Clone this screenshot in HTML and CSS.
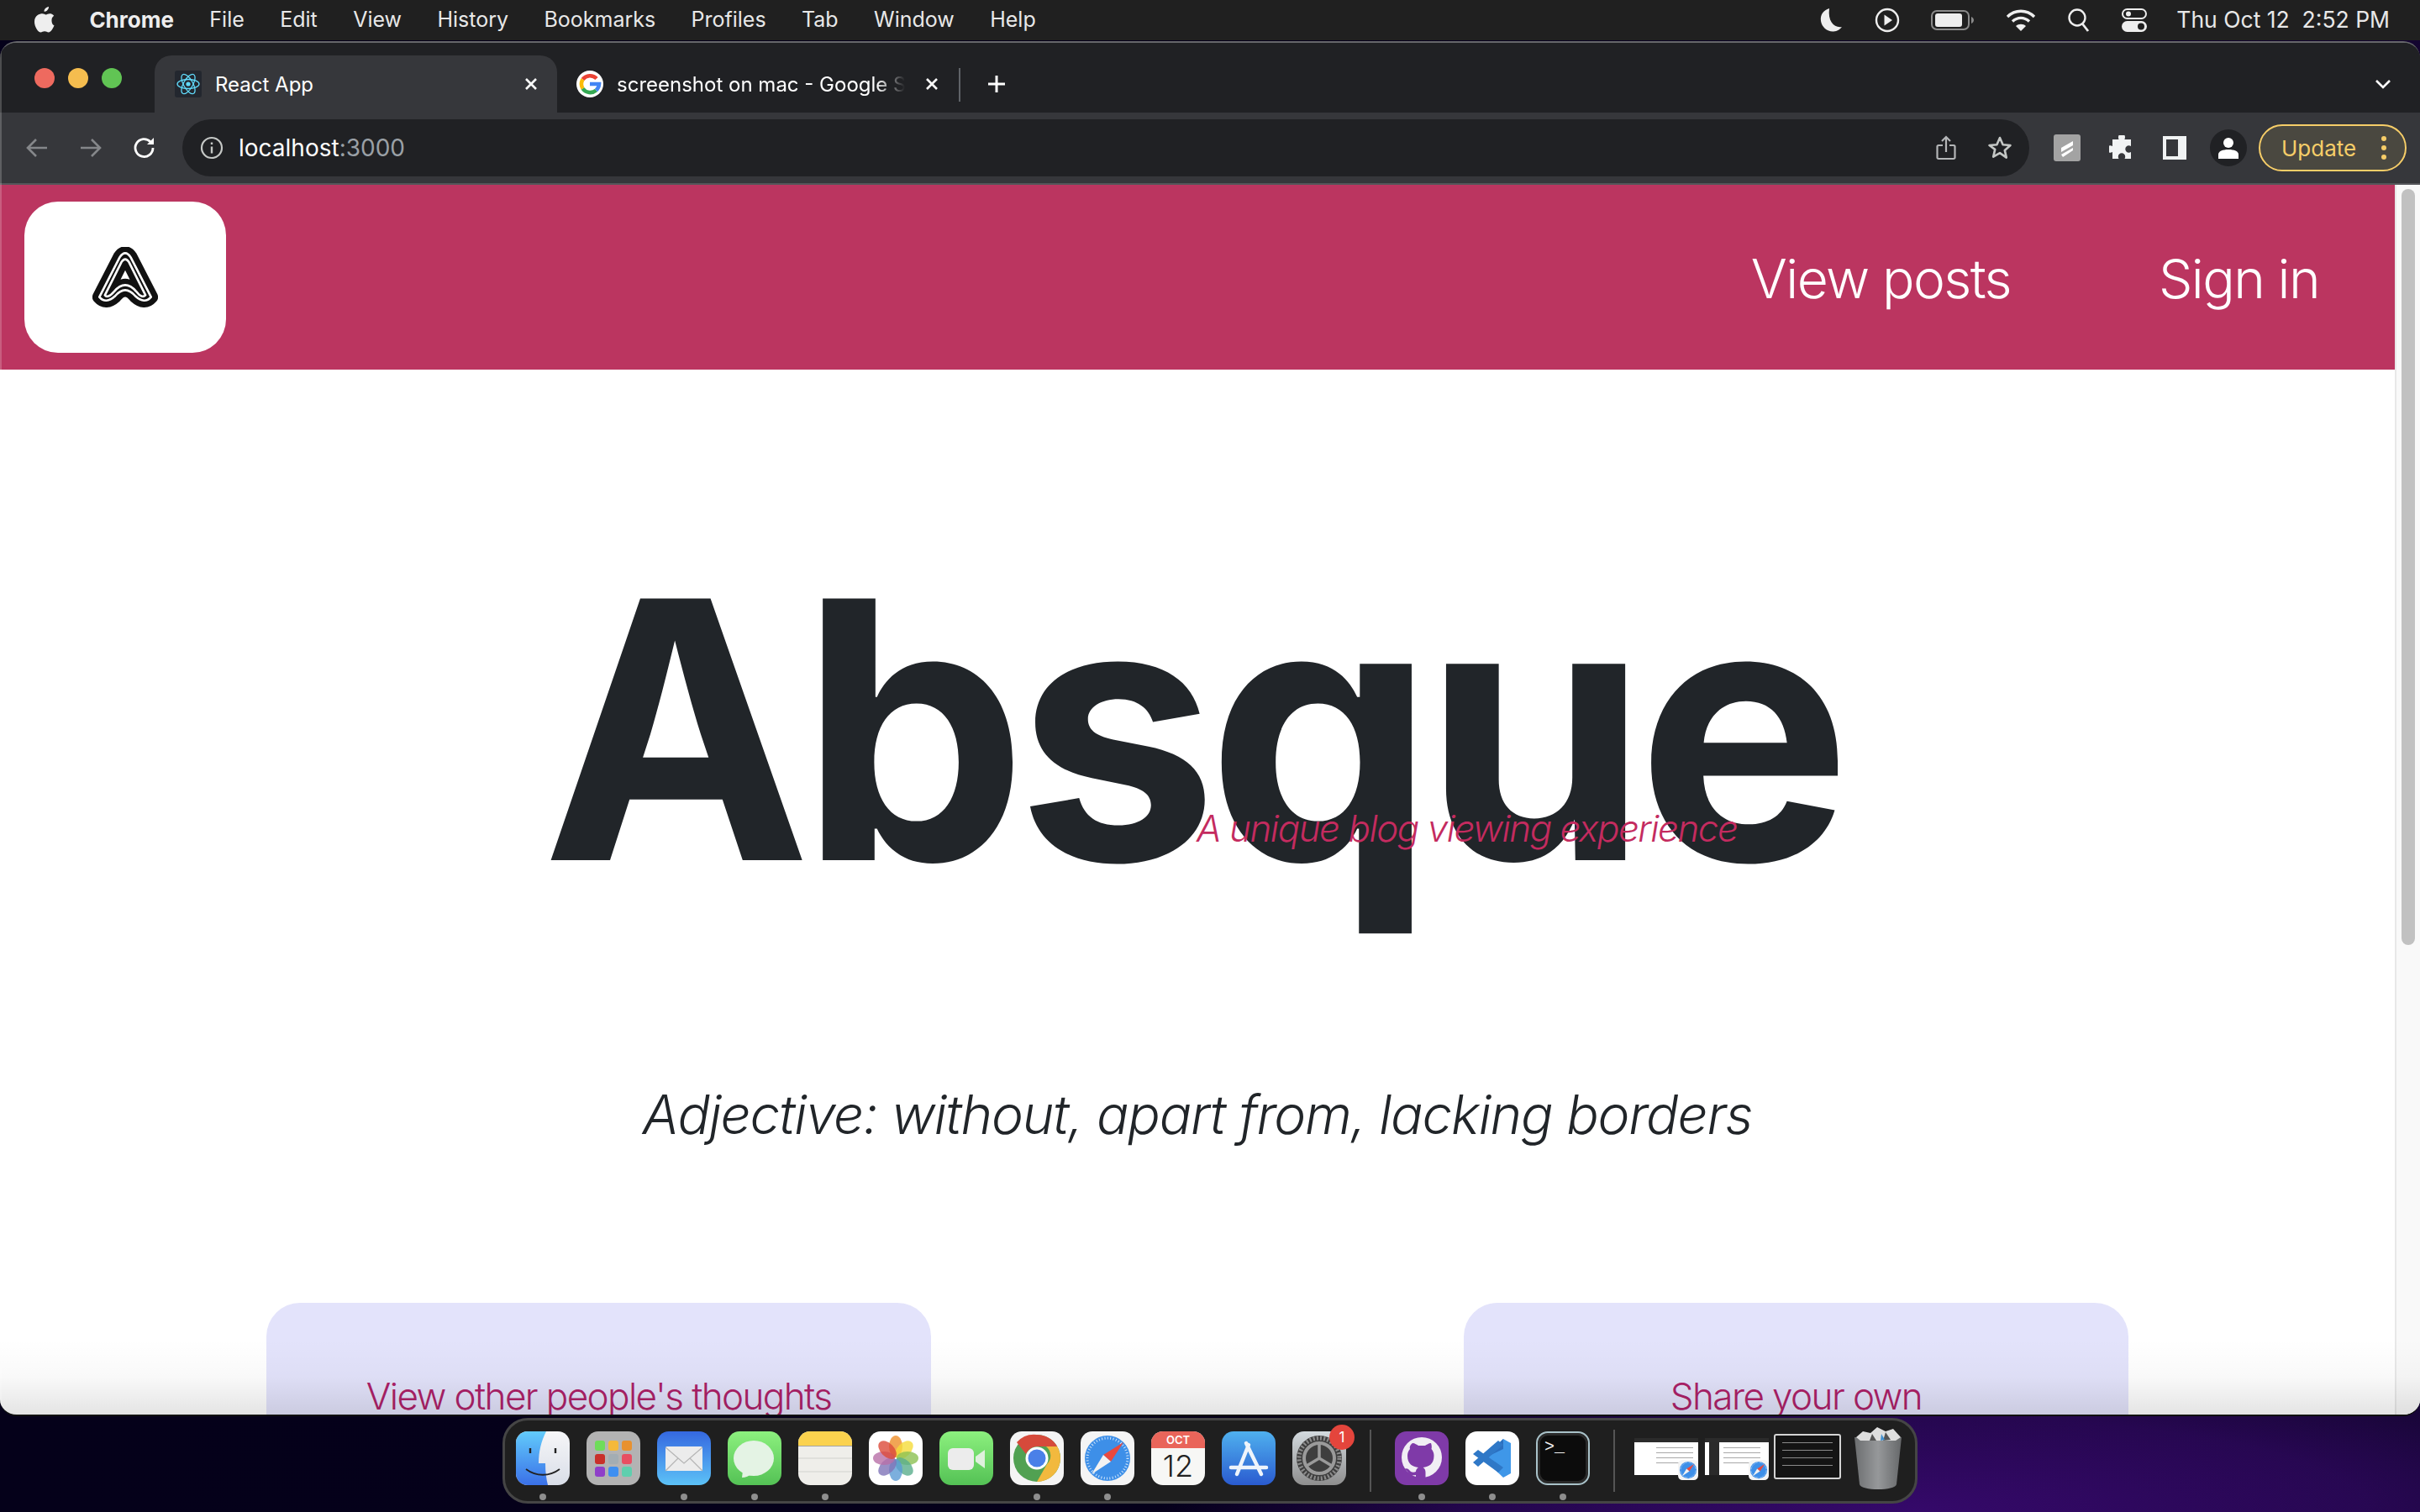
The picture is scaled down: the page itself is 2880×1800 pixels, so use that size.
FILE: index.html
```html
<!DOCTYPE html>
<html lang="en">
<head>
    <meta charset="UTF-8">
    <title>Absque</title>
    <link rel="stylesheet" href="styles.css">
</head>
<body>

<svg class="defs" width="0" height="0">
    <symbol id="safari" viewBox="0 0 64 64">
        <rect width="64" height="64" rx="14" fill="#f4f4f4"/>
        <circle cx="32" cy="32" r="27" fill="#3d8fe8"/>
        <circle cx="32" cy="32" r="24" fill="none" stroke="#cfe4fa" stroke-width="3" stroke-dasharray="1 2.4"/>
        <path d="M51 13 L27 28 L36 36 Z" fill="#e8493f"/>
        <path d="M13 51 L27 28 L36 36 Z" fill="#f2f2f2"/>
    </symbol>
</svg>

<!-- mac menu bar -->
<div class="menubar">
    <div class="menu-left">
        <svg class="apple" width="26" height="32" viewBox="0 0 26 32"><path fill="#eee" d="M18 1c.2 2.600-2.300 6-5.400 5.800C12.300 4 15 1.300 18 1zM21.500 16.500c0-3 2.400-4.500 2.700-4.800-1.500-2.200-3.800-2.500-4.600-2.500-2-.2-3.900 1.200-4.900 1.200s-2.600-1.200-4.200-1.200C7 9.300 1 11 1 19c0 6 4.400 12.500 7.500 12.500 1.500 0 2.500-1.200 4.600-1.200s2.900 1.200 4.600 1.200c3.200 0 6-5.900 6.800-8.200-3-1.300-3-5-3-6.800z"/></svg>
        <span class="menu-app">Chrome</span>
        <span>File</span>
        <span>Edit</span>
        <span>View</span>
        <span>History</span>
        <span>Bookmarks</span>
        <span>Profiles</span>
        <span>Tab</span>
        <span>Window</span>
        <span>Help</span>
    </div>
    <div class="menu-right">
        <svg width="28" height="30" viewBox="0 0 28 30"><path fill="#eee" d="M11 1C4 3 0 8.500 1 16c1 7.500 8 13 15 12.500 4.500-.3 8-2.500 10-5.500-9 1.500-17-6-15-22z"/></svg>
        <svg width="30" height="30" viewBox="0 0 30 30"><circle cx="15" cy="15" r="13" fill="none" stroke="#eee" stroke-width="2.400"/><path fill="#eee" d="M11.500 8.500 L21 15 L11.500 21.500z"/></svg>
        <svg width="52" height="24" viewBox="0 0 52 24"><rect x="1" y="1" width="44" height="22" rx="6" fill="none" stroke="#8a8a8a" stroke-width="2"/><rect x="5" y="4" width="32" height="16" rx="3" fill="#eee"/><path fill="#8a8a8a" d="M48 8c2 1 3 2.500 3 4s-1 3-3 4z"/></svg>
        <svg width="36" height="28" viewBox="0 0 36 28"><g fill="none" stroke="#eee" stroke-width="3.400"><path d="M2 10C11 1 25 1 34 10"/><path d="M8 15.500C14 10 22 10 28 15.500"/></g><path fill="#eee" d="M18 27l-6-6c3-3 9-3 12 0z"/></svg>
        <svg width="28" height="30" viewBox="0 0 28 30"><circle cx="12" cy="12" r="9.500" fill="none" stroke="#eee" stroke-width="2.400"/><path d="M18 19l7 9" stroke="#eee" stroke-width="2.800"/></svg>
        <svg width="30" height="28" viewBox="0 0 30 28"><rect x="1" y="1" width="28" height="11" rx="5.500" fill="none" stroke="#eee" stroke-width="2"/><circle cx="8" cy="6.500" r="3" fill="#eee"/><rect y="15" width="30" height="13" rx="6.500" fill="#eee"/><circle cx="23" cy="21.500" r="4" fill="#202020"/></svg>
        <span class="clock">Thu Oct 12&nbsp; 2:52 PM</span>
    </div>
</div>

<div class="desktop">
    <div class="window">

        <!-- tab strip -->
        <div class="tabstrip">
            <div class="lights">
                <i class="light red"></i>
                <i class="light yellow"></i>
                <i class="light green"></i>
            </div>
            <div class="tab tab-active">
                <svg class="favicon" width="32" height="32" viewBox="0 0 32 32">
                    <rect width="32" height="32" rx="3" fill="#23272f"/>
                    <g fill="none" stroke="#61dafb" stroke-width="1.300">
                        <ellipse cx="16" cy="16" rx="13" ry="5.500"/>
                        <ellipse cx="16" cy="16" rx="13" ry="5.500" transform="rotate(60 16 16)"/>
                        <ellipse cx="16" cy="16" rx="13" ry="5.500" transform="rotate(120 16 16)"/>
                    </g>
                    <circle cx="16" cy="16" r="2.600" fill="#61dafb"/>
                </svg>
                <span class="tab-title">React App</span>
                <svg class="tab-close" width="16" height="16" viewBox="0 0 16 16"><path d="M2 2l12 12M14 2L2 14" stroke="#fff" stroke-width="2.600"/></svg>
            </div>
            <div class="tab tab-other">
                <svg class="favicon" width="32" height="32" viewBox="0 0 32 32">
                    <circle cx="16" cy="16" r="16" fill="#fff"/>
                    <g fill="none" stroke-width="4.600">
                        <path d="M24 9.500A11 11 0 0 0 7.500 10.500" stroke="#ea4335"/>
                        <path d="M7.500 10.500a11 11 0 0 0 0 11" stroke="#fbbc05"/>
                        <path d="M7.500 21.500A11 11 0 0 0 23.500 23.500" stroke="#34a853"/>
                        <path d="M23.500 23.500A11 11 0 0 0 27 16H16" stroke="#4285f4"/>
                    </g>
                </svg>
                <span class="tab-title tab-fade">screenshot on mac - Google Search</span>
                <svg class="tab-close" width="16" height="16" viewBox="0 0 16 16"><path d="M2 2l12 12M14 2L2 14" stroke="#fff" stroke-width="2.600"/></svg>
            </div>
            <i class="tab-sep"></i>
            <svg class="tab-plus" width="24" height="24" viewBox="0 0 24 24"><path d="M12 2v20M2 12h20" stroke="#fff" stroke-width="3"/></svg>
            <svg class="tab-search" width="22" height="14" viewBox="0 0 22 14"><path d="M3 3l8 8 8-8" fill="none" stroke="#fff" stroke-width="2.600"/></svg>
        </div>

        <!-- toolbar -->
        <div class="toolbar">
            <div class="nav-btns">
                <svg width="28" height="28" viewBox="0 0 28 28"><path d="M26 14H3M13 4L3 14l10 10" fill="none" stroke="#85878a" stroke-width="2.600"/></svg>
                <svg width="28" height="28" viewBox="0 0 28 28"><path d="M2 14h23M15 4l10 10-10 10" fill="none" stroke="#85878a" stroke-width="2.600"/></svg>
                <svg width="28" height="28" viewBox="0 0 28 28"><path d="M24 14a10.500 10.500 0 1 1-3-7.300" fill="none" stroke="#fff" stroke-width="2.800"/><path d="M25 2v8h-8z" fill="#fff"/></svg>
            </div>
            <div class="urlbar">
                <svg width="28" height="28" viewBox="0 0 28 28"><circle cx="14" cy="14" r="12" fill="none" stroke="#c4c7c5" stroke-width="2.200"/><path d="M14 12.500v8M14 7.500v2.600" stroke="#c4c7c5" stroke-width="2.400"/></svg>
                <span class="url">localhost<span class="url-port">:3000</span></span>
                <svg class="url-share" width="24" height="30" viewBox="0 0 24 30"><path d="M8 12H3a1.500 1.500 0 0 0-1.500 1.500v13A1.500 1.500 0 0 0 3 28h18a1.500 1.500 0 0 0 1.500-1.500v-13A1.500 1.500 0 0 0 21 12h-5M12 20V2M7 7l5-5 5 5" fill="none" stroke="#b4b6b8" stroke-width="2.200"/></svg>
                <svg class="url-star" width="30" height="30" viewBox="0 0 30 30"><path d="M15 3l3.600 8.200 8.900.8-6.700 5.900 2 8.700L15 21.100l-7.800 4.500 2-8.700L2.500 12l8.900-.8z" fill="none" stroke="#c4c7c5" stroke-width="2.600" stroke-linejoin="round"/></svg>
            </div>
            <div class="toolbar-right">
                <svg width="32" height="32" viewBox="0 0 32 32"><rect width="32" height="32" rx="3" fill="#a3a3a3"/><path d="M9 16l14-8v5L9 21zM9 24l14-8v3L11 27z" fill="#fff"/></svg>
                <svg width="30" height="30" viewBox="0 0 30 30"><path fill="#f1f3f4" d="M11 2.500a4 4 0 0 1 8 0c0 1-.3 1.500-.6 2.500H26v8c-1-.5-1.500-.7-2.500-.7a4.200 4.200 0 0 0 0 8.400c1 0 1.500-.2 2.500-.7v8h-7.500c.5-1 .7-1.500.7-2.500a4.200 4.200 0 0 0-8.400 0c0 1 .2 1.500.7 2.500H4v-8c-1 .5-2 .7-2.500.7a4.200 4.200 0 0 1 0-8.400c.5 0 1.500.2 2.500.7V5h7.500c-.3-1-.5-1.500-.5-2.500z"/></svg>
                <svg width="28" height="28" viewBox="0 0 28 28"><path fill-rule="evenodd" fill="#f1f3f4" d="M0 0h28v28H0zM4 4v20h14V4z"/></svg>
                <span class="avatar">
                    <svg width="26" height="26" viewBox="0 0 26 26"><circle cx="13" cy="7" r="6" fill="#fff"/><path d="M1 26v-5c0-4 5-6 12-6s12 2 12 6v5z" fill="#fff"/></svg>
                </span>
                <span class="update">
                    <span>Update</span>
                    <span class="update-dots"><i></i><i></i><i></i></span>
                </span>
            </div>
        </div>

        <!-- page -->
        <div class="viewport">
            <div class="page">
                <header class="site-header">
                    <div class="logo-card">
                        <svg width="78" height="72" viewBox="3.500 6 71 65">
                            <path d="M11 60 L33 17 Q39 8 45 17 L67 60 Q60 68 50 59 Q39 46 28 59 Q18 68 11 60Z" fill="#111" stroke="#111" stroke-width="15" stroke-linejoin="round"/>
                            <path d="M11 60 L33 17 Q39 8 45 17 L67 60 Q60 68 50 59 Q39 46 28 59 Q18 68 11 60Z" fill="#111" stroke="#fff" stroke-width="2.400" stroke-linejoin="round"/>
                            <path d="M17 58 L35 22 Q39 16 43 22 L61 58 Q57 62 51 54 Q39 40 27 54 Q20 62 17 58Z" fill="#111" stroke="#fff" stroke-width="2.400" stroke-linejoin="round"/>
                            <path d="M39 31 L44 41 Q39 39 34 41Z" fill="#fff"/>
                        </svg>
                    </div>
                    <nav class="site-nav">
                        <a>View posts</a>
                        <a>Sign in</a>
                    </nav>
                </header>
                <section class="hero">
                    <h1>Absque</h1>
                    <p class="hero-sub">A unique blog viewing experience</p>
                    <p class="hero-def">Adjective: without, apart from, lacking borders</p>
                </section>
                <section class="cards">
                    <div class="card">View other people's thoughts</div>
                    <div class="card">Share your own</div>
                </section>
            </div>
            <div class="scrollbar"><i class="scroll-thumb"></i></div>
            <div class="dock-shade"></div>
        </div>
    </div>

    <!-- dock -->
    <div class="dock">
        <div class="dock-item on">
            <svg class="icon" viewBox="0 0 64 64"><defs><linearGradient id="finder-bg" x1="0" y1="0" x2="0" y2="1"><stop offset="0" stop-color="#62cbfb"/><stop offset="1" stop-color="#3a70e8"/></linearGradient><linearGradient id="finder-face" x1="0" y1="0" x2="0" y2="1"><stop offset="0" stop-color="#f6f6f8"/><stop offset="1" stop-color="#d9dee8"/></linearGradient></defs><rect width="64" height="64" rx="14" fill="url(#finder-face)"/><path d="M14 0h22c-6 12-9 24-9 38h8c0 10 1 18 3 26H14A14 14 0 0 1 0 50V14A14 14 0 0 1 14 0z" fill="url(#finder-bg)"/><path d="M17 20v6M47 20v6" stroke="#222" stroke-width="2.400"/><path d="M12 45c12 9 28 9 40 0" fill="none" stroke="#222" stroke-width="1.800"/></svg>
        </div>
        <div class="dock-item">
            <svg class="icon" viewBox="0 0 64 64"><rect width="64" height="64" rx="14" fill="#b3b3b3"/><g><rect x="10" y="11" width="12" height="12" rx="3" fill="#6fdc5a"/><rect x="26" y="11" width="12" height="12" rx="3" fill="#f4b93a"/><rect x="42" y="11" width="12" height="12" rx="3" fill="#e8912f"/><rect x="10" y="27" width="12" height="12" rx="3" fill="#c9302a"/><rect x="26" y="27" width="12" height="12" rx="3" fill="#a3adb3"/><rect x="42" y="27" width="12" height="12" rx="3" fill="#e84f62"/><rect x="10" y="42" width="12" height="12" rx="3" fill="#8f3fc9"/><rect x="26" y="42" width="12" height="12" rx="3" fill="#3f8ff0"/><rect x="42" y="42" width="12" height="12" rx="3" fill="#5fcfae"/></g></svg>
        </div>
        <div class="dock-item on">
            <svg class="icon" viewBox="0 0 64 64"><defs><linearGradient id="mail-bg" x1="0" y1="0" x2="0" y2="1"><stop offset="0" stop-color="#3568e0"/><stop offset="1" stop-color="#5cc2f7"/></linearGradient></defs><rect width="64" height="64" rx="14" fill="url(#mail-bg)"/><rect x="10" y="18" width="44" height="29" rx="2" fill="#ececec"/><path d="M10 19l22 19 22-19M10 47l15-15M54 47L39 32" fill="none" stroke="#b5b5b5" stroke-width="1.200"/></svg>
        </div>
        <div class="dock-item on">
            <svg class="icon" viewBox="0 0 64 64"><defs><linearGradient id="msg-bg" x1="0" y1="0" x2="0" y2="1"><stop offset="0" stop-color="#8cf07e"/><stop offset="1" stop-color="#54c255"/></linearGradient></defs><rect width="64" height="64" rx="14" fill="url(#msg-bg)"/><ellipse cx="31" cy="32" rx="24" ry="21" fill="#e4f3e4"/><path d="M18 47l-1 8c4 0 9-2 12-5z" fill="#e4f3e4"/></svg>
        </div>
        <div class="dock-item on">
            <svg class="icon" viewBox="0 0 64 64"><rect width="64" height="64" rx="14" fill="#efeeea"/><path d="M0 17V14A14 14 0 0 1 14 0h36a14 14 0 0 1 14 14v3z" fill="#fbd24e"/><path d="M0 17.500h64" stroke="#a5a5a0" stroke-width="1.200"/><path d="M0 32h64M0 48h64" stroke="#dcdcd8" stroke-width="1.400"/></svg>
        </div>
        <div class="dock-item">
            <svg class="icon" viewBox="0 0 64 64"><rect width="64" height="64" rx="14" fill="#fff"/><g fill-opacity=".8"><ellipse cx="32" cy="18" rx="8" ry="13" fill="#ee8f2a"/><ellipse cx="32" cy="18" rx="8" ry="13" fill="#f5dc3a" transform="rotate(45 32 32)"/><ellipse cx="32" cy="18" rx="8" ry="13" fill="#8cc152" transform="rotate(90 32 32)"/><ellipse cx="32" cy="18" rx="8" ry="13" fill="#5aae8c" transform="rotate(135 32 32)"/><ellipse cx="32" cy="18" rx="8" ry="13" fill="#5b9bd5" transform="rotate(180 32 32)"/><ellipse cx="32" cy="18" rx="8" ry="13" fill="#7f74b8" transform="rotate(225 32 32)"/><ellipse cx="32" cy="18" rx="8" ry="13" fill="#b86fa8" transform="rotate(270 32 32)"/><ellipse cx="32" cy="18" rx="8" ry="13" fill="#dc4a3a" transform="rotate(315 32 32)"/></g></svg>
        </div>
        <div class="dock-item">
            <svg class="icon" viewBox="0 0 64 64"><defs><linearGradient id="ft-bg" x1="0" y1="0" x2="0" y2="1"><stop offset="0" stop-color="#8cf07e"/><stop offset="1" stop-color="#54c255"/></linearGradient></defs><rect width="64" height="64" rx="14" fill="url(#ft-bg)"/><rect x="10" y="20" width="31" height="26" rx="6" fill="#ececec"/><path d="M43 30l11-8v22l-11-8z" fill="#dff0dd"/></svg>
        </div>
        <div class="dock-item on">
            <svg class="icon" viewBox="0 0 64 64"><rect width="64" height="64" rx="14" fill="#f4f4f4"/><circle cx="32" cy="32" r="28" fill="#51a152"/><path d="M32 4a28 28 0 0 1 24.200 14H32a14 14 0 0 0-13 9L8 13A28 28 0 0 1 32 4z" fill="#d64a3b"/><path d="M56.200 18A28 28 0 0 1 32 60l12-21a14 14 0 0 0-1-21z" fill="#f2b93e"/><circle cx="32" cy="32" r="13.500" fill="#fff"/><circle cx="32" cy="32" r="10.500" fill="#4a80e8"/></svg>
        </div>
        <div class="dock-item on">
            <svg class="icon"><use href="#safari"/></svg>
        </div>
        <div class="dock-item">
            <div class="calendar">
                <span class="cal-month">OCT</span>
                <span class="cal-day">12</span>
            </div>
        </div>
        <div class="dock-item">
            <svg class="icon" viewBox="0 0 64 64"><defs><linearGradient id="store-bg" x1="0" y1="0" x2="0" y2="1"><stop offset="0" stop-color="#4fb0ee"/><stop offset="1" stop-color="#2a5bd0"/></linearGradient></defs><rect width="64" height="64" rx="14" fill="url(#store-bg)"/><path d="M11 43h42M32 16L18 51M29 14l18 37" fill="none" stroke="#eef4fb" stroke-width="4.500" stroke-linecap="round"/></svg>
        </div>
        <div class="dock-item">
            <svg class="icon" viewBox="0 0 64 64"><defs><linearGradient id="set-bg" x1="0" y1="0" x2="0" y2="1"><stop offset="0" stop-color="#d3dade"/><stop offset="1" stop-color="#8e8e8e"/></linearGradient></defs><rect width="64" height="64" rx="14" fill="url(#set-bg)"/><circle cx="32" cy="32" r="27" fill="#3e3e3e"/><circle cx="32" cy="32" r="24" fill="none" stroke="#8c8c8c" stroke-width="5" stroke-dasharray="2 2.200"/><circle cx="32" cy="32" r="18" fill="none" stroke="#9a9a9a" stroke-width="4"/><path d="M32 32V15M32 32L17 41M32 32l15 9" stroke="#9a9a9a" stroke-width="3.500"/></svg>
            <span class="badge">1</span>
        </div>
        <i class="dock-sep"></i>
        <div class="dock-item on">
            <svg class="icon" viewBox="0 0 64 64"><rect width="64" height="64" rx="14" fill="#7f3aa8"/><circle cx="32" cy="31" r="24" fill="#f1eef4"/><path d="M21 14c3 0 5 2 7 3h8c2-1 4-3 7-3 1 3 1 5 .5 7 2 2 3 5 3 8 0 10-6 13-13 14 2 1 3 3 3 6v15H25V52c-5 1-8 0-10-4-1-2-3-3-4-3 4-2 6 1 8 3 2 1 4 1 6 0 0-2 1-4 3-5-7-1-13-4-13-14 0-3 1-6 3-8-.5-2-.5-4 3-7z" fill="#7f3aa8"/></svg>
        </div>
        <div class="dock-item on">
            <svg class="icon" viewBox="0 0 64 64"><rect width="64" height="64" rx="14" fill="#fff"/><path d="M45 9l9 5v36l-9 5-24-23z" fill="#3f97e8"/><path d="M45 9L22 32 45 21z" fill="#2b6fbf"/><path d="M15 22l-6 5 30 22 6-6zM9 37l6 5 30-26-6-5z" fill="#2f78c7"/></svg>
        </div>
        <div class="dock-item on">
            <div class="terminal">&gt;_</div>
        </div>
        <i class="dock-sep"></i>
        <div class="thumb">
            <div class="thumb-page"><i></i><i></i><i></i><i></i></div>
            <svg class="thumb-badge"><use href="#safari"/></svg>
        </div>
        <div class="thumb">
            <div class="thumb-page thumb-page-split"><i></i><i></i><i></i><i></i></div>
            <svg class="thumb-badge"><use href="#safari"/></svg>
        </div>
        <div class="thumb thumb-dark">
            <div class="thumb-page thumb-page-dark"><i></i><i></i><i></i><i></i></div>
        </div>
        <svg class="trash" viewBox="0 0 58 76">
            <defs>
                <linearGradient id="trash-can" x1="0" y1="0" x2="1" y2="0">
                    <stop offset="0" stop-color="#6c6e70"/>
                    <stop offset=".5" stop-color="#96989a"/>
                    <stop offset="1" stop-color="#66686a"/>
                </linearGradient>
            </defs>
            <path d="M1 14h56l-6 56c-1 4-11 6-22 6S8 74 7 70z" fill="url(#trash-can)"/>
            <path d="M3 14l8-7 9 2 8-7 10 5 9-3 9 10-6 4H8z" fill="#dedede"/>
            <path d="M22 10l5 8-8 0zM38 8l6 9-9 1z" fill="#555"/>
            <path d="M33 10l4 7-5 1z" fill="#3f8fd0"/>
        </svg>
    </div>
</div>

</body>
</html>
```

FILE: styles.css
```css
* {
    box-sizing: border-box;
}

html, body {
    margin: 0;
    height: 1800px;
    overflow: hidden;
}

body {
    width: 2880px;
    font-family: Inter, "Liberation Sans", sans-serif;
    background: #202020;
}

.defs {
    position: absolute;
}

/* menu bar */
.menubar {
    height: 48px;
    background: #202020;
    color: #e8e8e8;
    font-size: 25px;
    display: flex;
    align-items: center;
    justify-content: space-between;
    padding: 0 36px 0 40px;
}

.menu-left {
    display: flex;
    align-items: center;
    gap: 42.400px;
    padding-bottom: 2px;
}

.apple {
    margin-right: -2px;
}

.menu-app {
    font-weight: 700;
    font-size: 26px;
    color: #eee;
}

.menu-right {
    display: flex;
    align-items: center;
    gap: 37px;
}

.clock {
    font-size: 26.500px;
    margin-left: -2px;
    padding-bottom: 2px;
}

/* desktop */
.desktop {
    position: relative;
    height: 1752px;
    background:
        radial-gradient(ellipse 900px 190px at 2280px 1752px, #35096a 0%, rgba(53, 9, 106, 0.6) 60%, rgba(53, 9, 106, 0) 100%),
        linear-gradient(90deg, #05011a 0%, #05001a 55%, #0c0326 75%, #140530 100%);
}

.window {
    position: absolute;
    top: 1px;
    left: 0;
    width: 2880px;
    height: 1637px;
    display: flex;
    flex-direction: column;
    border-radius: 20px;
    overflow: hidden;
    background: #202124;
    border-top: 2px solid #66676a;
    border-bottom: 2px solid #111;
}

.window::after {
    content: "";
    position: absolute;
    left: 0;
    top: 0;
    bottom: 0;
    width: 2px;
    background: rgba(255, 255, 255, 0.2);
}

.tabstrip {
    height: 83px;
    flex: none;
    display: flex;
    align-items: flex-end;
    position: relative;
    background: #202124;
}

.lights {
    width: 184px;
    align-self: flex-start;
    padding: 30px 0 0 41px;
    display: flex;
    gap: 16px;
}

.light {
    width: 24px;
    height: 24px;
    border-radius: 50%;
}

.red { background: #ee6a5f; }
.yellow { background: #f5bd4f; }
.green { background: #61c454; }

.tab {
    height: 68px;
    display: flex;
    align-items: center;
    color: #fff;
    font-size: 24px;
}

.tab-active {
    width: 479px;
    background: #36373b;
    border-radius: 20px 20px 0 0;
    padding: 0 23px 0 24px;
}

.tab-other {
    width: 470px;
    padding: 0 16px 0 23px;
}

.tab-title {
    margin-left: 16px;
    flex: 1;
    white-space: nowrap;
    overflow: hidden;
}

.tab-fade {
    -webkit-mask-image: linear-gradient(90deg, #000 90%, transparent 100%);
    mask-image: linear-gradient(90deg, #000 90%, transparent 100%);
}

.tab-close {
    flex: none;
    margin-left: 24px;
}

.tab-sep {
    width: 2px;
    height: 40px;
    background: #5f6368;
    margin: 0 0 13px 8px;
}

.tab-plus {
    margin: 0 0 22px 31px;
}

.tab-search {
    margin: 0 33px 27px auto;
}

.toolbar {
    height: 86px;
    flex: none;
    background: #36373b;
    border-bottom: 2px solid #55565a;
    display: flex;
    align-items: center;
}

.nav-btns {
    width: 217px;
    padding: 0 0 0 30px;
    display: flex;
    gap: 36px;
}

.urlbar {
    width: 2198px;
    height: 68px;
    background: #202124;
    border-radius: 34px;
    display: flex;
    align-items: center;
    padding: 0 20px 0 21px;
}

.url {
    margin-left: 18px;
    font-size: 28px;
    color: #fff;
}

.url-port {
    color: #9aa0a6;
}

.url-share {
    margin-left: auto;
}

.url-star {
    margin-left: 37px;
}

.toolbar-right {
    flex: 1;
    display: flex;
    align-items: center;
    padding-left: 29px;
    gap: 34px;
}

.toolbar-right > svg {
    flex: none;
}

.avatar {
    width: 44px;
    height: 44px;
    margin-left: -6px;
    border-radius: 50%;
    background: #202124;
    display: flex;
    align-items: center;
    justify-content: center;
}

.update {
    width: 176px;
    height: 56px;
    margin-left: -20px;
    border: 2px solid #f6cd68;
    border-radius: 28px;
    background: #4a4840;
    color: #f6cd68;
    font-size: 26px;
    display: flex;
    align-items: center;
    justify-content: space-between;
    padding: 0 22px 0 25px;
}

.update-dots {
    display: flex;
    flex-direction: column;
    gap: 5px;
}

.update-dots i {
    width: 6px;
    height: 6px;
    border-radius: 50%;
    background: #f6cd68;
}

/* the page in the browser */
.viewport {
    flex: 1;
    display: flex;
    background: #fff;
    position: relative;
    overflow: hidden;
}

.page {
    flex: 1;
    min-width: 0;
}

.site-header {
    height: 220px;
    background: #bb3560;
    display: flex;
    align-items: center;
    justify-content: space-between;
    padding: 0 90px 0 29px;
}

.logo-card {
    width: 240px;
    height: 180px;
    background: #fff;
    border-radius: 40px;
    display: flex;
    align-items: center;
    justify-content: center;
}

.site-nav {
    display: flex;
    gap: 176px;
    padding-top: 2px;
    color: #fff;
    font-size: 64px;
    font-weight: 300;
    letter-spacing: -1.600px;
}

.hero {
    display: flex;
    flex-direction: column;
    align-items: center;
}

.hero h1 {
    margin: 166px 14px 0 0;
    height: 524px;
    font-size: 428px;
    line-height: 524px;
    font-weight: 700;
    color: #212529;
    letter-spacing: -12.500px;
}

.hero-sub {
    align-self: flex-start;
    margin: -172px 0 0 1424px;
    font-size: 44px;
    line-height: 56px;
    font-weight: 300;
    font-style: italic;
    letter-spacing: -1.500px;
    color: #c42b5f;
    white-space: nowrap;
}

.hero-def {
    margin: 277px 0 0;
    font-size: 64px;
    line-height: 72px;
    font-weight: 300;
    font-style: italic;
    letter-spacing: -1.200px;
    color: #212529;
}

.cards {
    display: flex;
    justify-content: space-between;
    padding: 0 317px;
    margin-top: 188px;
}

.card {
    width: 791px;
    height: 400px;
    background: #e3e3fb;
    border-radius: 40px;
    color: #ad2168;
    font-size: 44px;
    font-weight: 300;
    letter-spacing: -1.600px;
    text-align: center;
    padding-top: 84px;
}

.scrollbar {
    width: 30px;
    flex: none;
    background: #f9f9f9;
    border-left: 2px solid #e8e8e8;
    padding: 5px 0 0 6px;
}

.scroll-thumb {
    display: block;
    width: 16px;
    height: 900px;
    border-radius: 8px;
    background: #c1c1c1;
}

.dock-shade {
    position: absolute;
    left: 0;
    right: 0;
    bottom: 0;
    height: 90px;
    background: linear-gradient(rgba(0, 0, 0, 0), rgba(0, 0, 0, 0.025) 50%, rgba(0, 0, 0, 0.105));
}

/* dock */
.dock {
    position: absolute;
    left: 598px;
    top: 1640px;
    width: 1684px;
    height: 102px;
    background: #1f1f1f;
    border: 3px solid #454545;
    border-radius: 30px;
    display: flex;
    align-items: flex-start;
    padding: 13px 0 0 13px;
    gap: 20px;
}

.dock-item {
    width: 64px;
    height: 64px;
    flex: none;
    position: relative;
}

.dock-item.on::after {
    content: "";
    position: absolute;
    left: 28px;
    top: 74px;
    width: 8px;
    height: 8px;
    border-radius: 50%;
    background: #8e8e8e;
}

.icon {
    display: block;
    width: 64px;
    height: 64px;
}

.dock-sep {
    width: 2px;
    height: 74px;
    margin: -2px 8px 0;
    background: #555;
    flex: none;
}

.dock-sep + .thumb {
    margin-left: -5px;
}

.calendar {
    width: 64px;
    height: 64px;
    border-radius: 14px;
    overflow: hidden;
    background: #f7f7f5;
    display: flex;
    flex-direction: column;
    align-items: center;
}

.cal-month {
    width: 100%;
    height: 20px;
    background: #e9655a;
    color: #fff;
    font-size: 13px;
    line-height: 20px;
    font-weight: 600;
    text-align: center;
}

.cal-day {
    font-size: 36px;
    line-height: 42px;
    font-weight: 300;
    color: #222;
}

.badge {
    position: absolute;
    top: -8px;
    right: -10px;
    width: 30px;
    height: 30px;
    border-radius: 50%;
    background: #e4453c;
    color: #fff;
    font-size: 17px;
    line-height: 30px;
    text-align: center;
}

.terminal {
    width: 64px;
    height: 64px;
    border-radius: 14px;
    background: #0c0c0c;
    border: 2px solid #a9c2c9;
    box-shadow: inset 0 0 0 3px #2a2a2a;
    color: #f2f2f2;
    font-family: "Liberation Mono", monospace;
    font-size: 20px;
    line-height: 20px;
    padding: 7px 0 0 8px;
}

.thumb {
    position: relative;
    width: 76px;
    height: 64px;
    flex: none;
    margin-right: -12px;
    padding-top: 8px;
}

.thumb-dark {
    width: 80px;
    margin: 0 0 0 -2px;
    padding-top: 3px;
}

.thumb-page {
    height: 44px;
    background: #fff;
    padding: 6px 6px 0 26px;
    border-top: 5px solid #2b2b2b;
}

.thumb-page i {
    display: block;
    height: 1px;
    margin-bottom: 5px;
    background: #a8a8a8;
}

.thumb-page-split {
    padding-left: 22px;
    padding-right: 10px;
    background: linear-gradient(90deg, #fff 5px, #2a2a2a 5px, #2a2a2a 17px, #fff 17px);
}

.thumb-page-dark {
    height: 54px;
    background: #141414;
    border: 2px solid #d4d4d4;
    border-radius: 3px;
    padding: 8px 8px 0;
}

.thumb-page-dark i {
    background: #8a8a8a;
    margin-bottom: 8px;
}

.thumb-badge {
    position: absolute;
    right: 0;
    top: 34px;
    width: 24px;
    height: 24px;
}

.trash {
    width: 58px;
    height: 76px;
    flex: none;
    margin: -7px 0 0 -5px;
}
```
